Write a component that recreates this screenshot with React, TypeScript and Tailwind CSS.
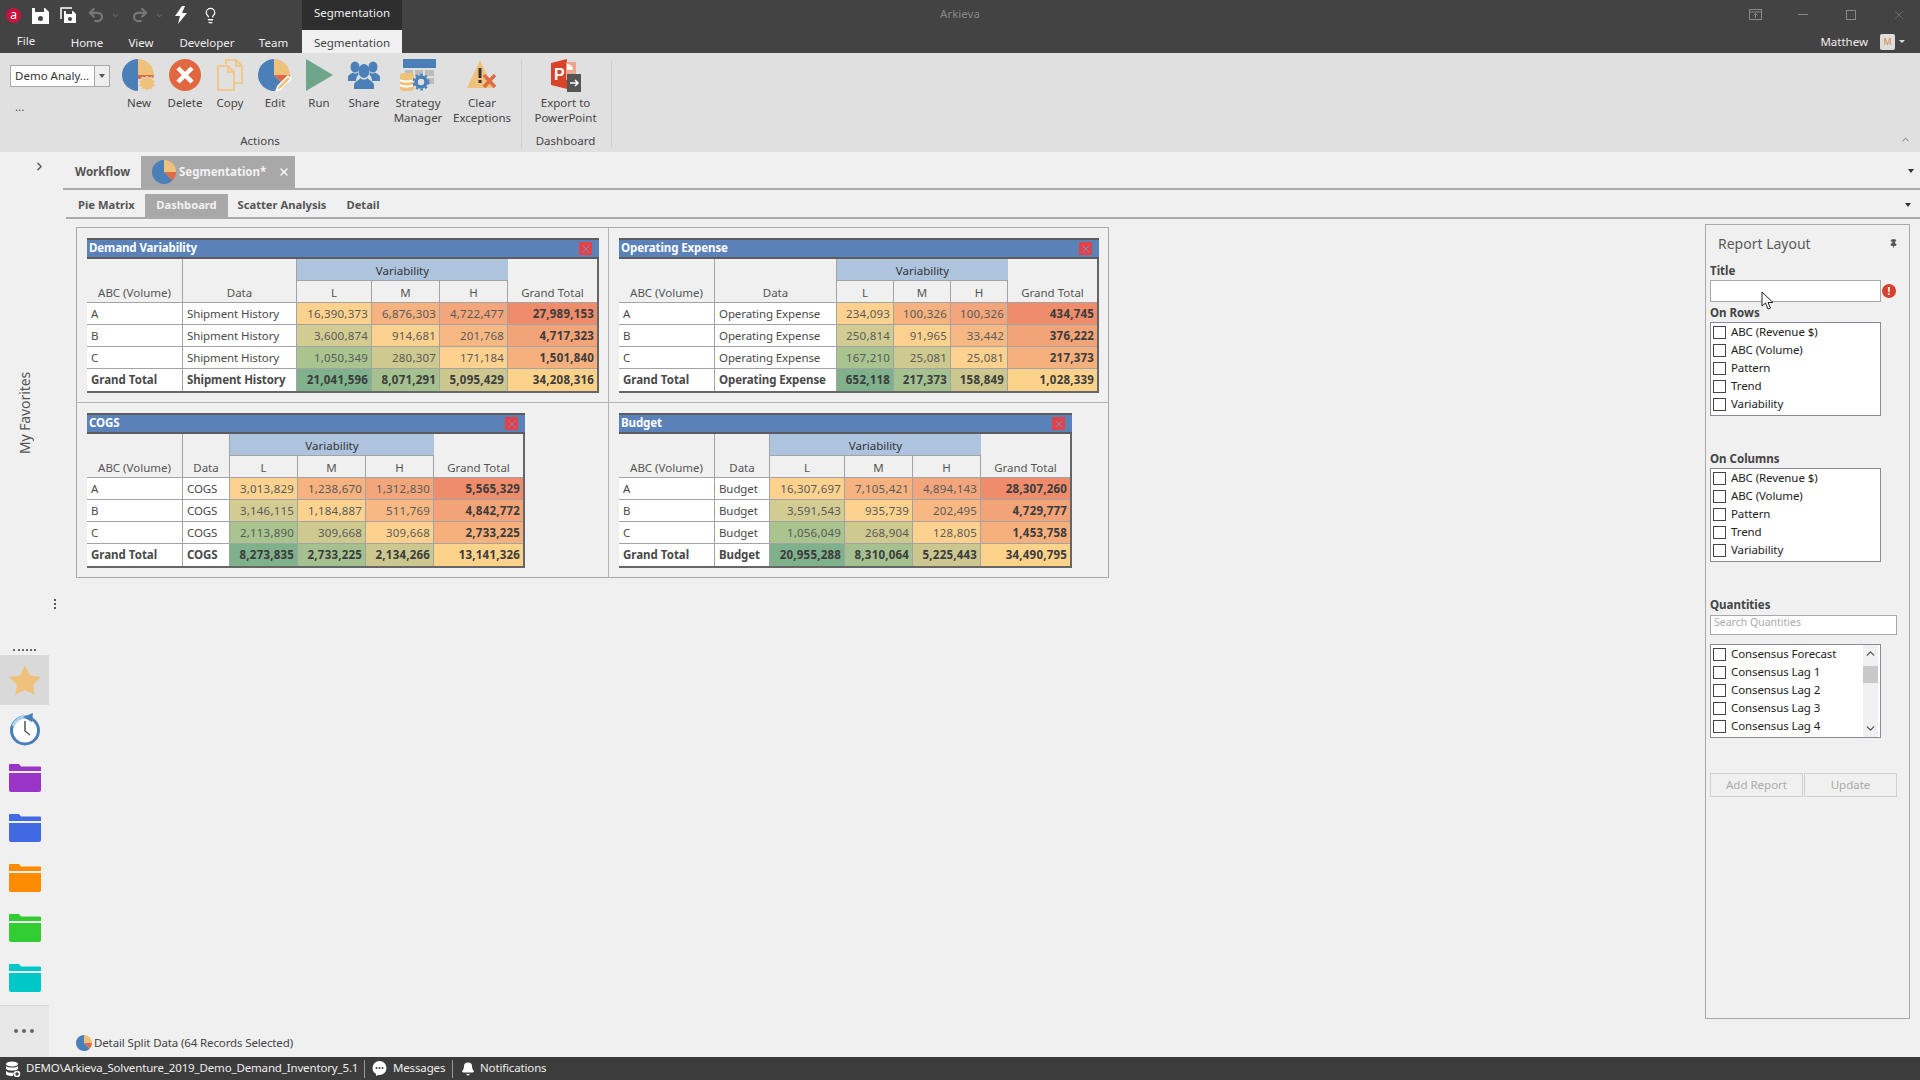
import React from "react";
import { ChevronRight, ChevronUp, ChevronDown, Lightbulb, Undo2, Redo2, X, Pin, Bell } from "lucide-react";

const BLUE = "#4a7fb8", TAN = "#efc27c", ORG = "#de6b46";

function Pie({ s = 32, wedge = true }: { s?: number; wedge?: boolean }) {
  return (
    <svg width={s} height={s} viewBox="0 0 32 32">
      <path d="M16 0A16 16 0 1 0 27.3 27.3L16 16Z" fill={BLUE} />
      <path d="M16 0A16 16 0 0 1 32 16H16Z" fill={TAN} />
      {wedge && <path d="M16 16H32A16 16 0 0 1 27.3 27.3Z" fill={ORG} />}
    </svg>
  );
}
function NewIcon() {
  return (
    <svg width="34" height="32" viewBox="0 0 34 32">
      <path d="M16 0A16 16 0 1 0 16 32V16Z" fill={BLUE} />
      <path d="M16 0A16 16 0 0 1 32 16H16Z" fill={TAN} />
      <path d="M16 16H32L31 20H16Z" fill={ORG} />
      <path d="M25 17l2 2 3-1 .5 3 3 1-1.500 2.500 1.500 2.500-3 1-.5 3-3-1-2 2-2-2-3 1-.5-3-3-1 1.500-2.500-1.500-2.500 3-1 .5-3 3 1z" fill={TAN} stroke="#e0e0e0" strokeWidth=".8" />
    </svg>
  );
}
function DeleteIcon() {
  return (
    <svg width="32" height="32" viewBox="0 0 32 32">
      <circle cx="16" cy="16" r="16" fill="#e0673f" />
      <path d="M9 9L23 23M23 9L9 23" stroke="#fff" strokeWidth="4.500" />
    </svg>
  );
}
function CopyIcon() {
  return (
    <svg width="26" height="32" viewBox="0 0 26 32" fill="none" stroke="#f0c88a" strokeWidth="2">
      <path d="M9 5V1H19L25 7V24H17" />
      <path d="M19 1V7H25" />
      <path d="M1 7H11L17 13V31H1Z" />
      <path d="M11 7V13H17" />
    </svg>
  );
}
function EditIcon() {
  return (
    <svg width="34" height="32" viewBox="0 0 34 32">
      <path d="M16 0A16 16 0 1 0 27.3 27.3L16 16Z" fill={BLUE} />
      <path d="M16 0A16 16 0 0 1 32 16H16Z" fill={TAN} />
      <path d="M16 16H32A16 16 0 0 1 27.3 27.3Z" fill={ORG} />
      <path d="M30 17L33 20L23 30L18 32L20 27Z" fill="#efc27c" stroke="#fff" strokeWidth="1.500" />
    </svg>
  );
}
function RunIcon() {
  return (
    <svg width="27" height="32" viewBox="0 0 27 32">
      <path d="M0 0L27 16L0 32Z" fill="#6fa68a" />
    </svg>
  );
}
function ShareIcon() {
  return (
    <svg width="32" height="28" viewBox="0 0 32 28" fill={BLUE}>
      <ellipse cx="7" cy="6" rx="4.500" ry="5.500" />
      <path d="M0 20V16C0 14 3 13 5 11.500C6 13 8 13 9.500 11.500C10 12.500 11 13 11 13C9 15 8 17 8 20Z" />
      <ellipse cx="25" cy="6" rx="4.500" ry="5.500" />
      <path d="M32 20V16C32 14 29 13 27 11.500C26 13 24 13 22.500 11.500C22 12.500 21 13 21 13C23 15 24 17 24 20Z" />
      <ellipse cx="16" cy="10" rx="5.500" ry="7" />
      <path d="M6 28V24C6 21 10 20 12.500 17C14 19 18 19 19.500 17C22 20 26 21 26 24V28Z" />
    </svg>
  );
}
function StrategyIcon() {
  return (
    <svg width="36" height="32" viewBox="0 0 36 32">
      <rect x="3" y="0" width="33" height="9" fill={BLUE} />
      <g fill="#bcbcbc">
        <rect x="5" y="11" width="8" height="6" /><rect x="15" y="11" width="8" height="6" /><rect x="25" y="11" width="9" height="6" />
        <rect x="25" y="19" width="9" height="6" />
      </g>
      <path d="M0 16C0 13 14 13 14 16V30C14 33 0 33 0 30Z" fill={TAN} />
      <path d="M0 21C3 23 11 23 14 21M0 26C3 28 11 28 14 26" stroke="#fff" strokeWidth="2" fill="none" />
      <circle cx="21" cy="23" r="5" fill="none" stroke={BLUE} strokeWidth="3.500" />
      <circle cx="21" cy="23" r="7.500" fill="none" stroke={BLUE} strokeWidth="2" strokeDasharray="2.500 2.400" />
    </svg>
  );
}
function ClearIcon() {
  return (
    <svg width="30" height="30" viewBox="0 0 30 30">
      <path d="M13 0L26 28H0Z" fill={TAN} />
      <rect x="11.500" y="8" width="3" height="10" fill="#333" />
      <rect x="11.500" y="20" width="3" height="3" fill="#333" />
      <path d="M17 15L28 27M28 15L17 27" stroke="#de6b46" strokeWidth="3.500" />
    </svg>
  );
}
function PptIcon() {
  return (
    <svg width="30" height="33" viewBox="0 0 30 33">
      <path d="M0 4L16 0V30L0 26Z" fill="#d9432a" />
      <rect x="15" y="3" width="10" height="18" fill="#f0a58e" />
      <path d="M16 5A6 6 0 0 1 22 11H16Z" fill="#fff" />
      <text x="3" y="21" fontSize="16" fontWeight="700" fill="#fff" fontFamily="Liberation Sans">P</text>
      <rect x="16" y="15" width="14" height="18" fill="#555" />
      <path d="M19 24H27M24 21L27 24L24 27" stroke="#fff" strokeWidth="1.500" fill="none" />
    </svg>
  );
}
function Folder({ tab, body }: { tab: string; body: string }) {
  return (
    <svg width="32" height="28" viewBox="0 0 32 28">
      <path d="M1 0H10L12 2.500H31A1 1 0 0 1 32 3.500V7H0V1A1 1 0 0 1 1 0Z" fill={tab} />
      <path d="M0 9H32V26A2 2 0 0 1 30 28H2A2 2 0 0 1 0 26Z" fill={body} />
    </svg>
  );
}
function ClockIcon() {
  return (
    <svg width="32" height="33" viewBox="0 0 32 33">
      <circle cx="16" cy="17.500" r="13.500" fill="#fff" stroke="#4a7fb8" strokeWidth="3" />
      <path d="M4 13A13.500 13.500 0 0 1 18 4" stroke="#a9d4ee" strokeWidth="3" fill="none" />
      <path d="M14 4L24 0L23 9Z" fill="#4a7fb8" />
      <path d="M16 8V18L21 22" stroke="#555" strokeWidth="1.500" fill="none" />
    </svg>
  );
}
function Floppy({ all }: { all?: boolean }) {
  return (
    <svg width="17" height="17" viewBox="0 0 17 17">
      {all && <path d="M1 12V1H12" fill="none" stroke="#fff" strokeWidth="1.500" />}
      <path d={all ? "M4 4H13L16 7V16H4Z" : "M0 1H13L17 5V17H0Z"} fill="#fff" />
      <rect x={all ? 6 : 3} y={all ? 4 : 1} width={all ? 6 : 9} height={all ? 3 : 4} fill="#434343" />
      <circle cx={all ? 10 : 8.500} cy={all ? 12 : 11.500} r={all ? 2 : 2.500} fill="#434343" />
    </svg>
  );
}

const CELL = [
  ["bg-[#fdd28f]", "bg-[#f6b27f]", "bg-[#f3a67b]", "bg-[#ee8c6c]"],
  ["bg-[#d3cc92]", "bg-[#fdd28f]", "bg-[#f8b884]", "bg-[#f3a378]"],
  ["bg-[#a9c48f]", "bg-[#cdc98f]", "bg-[#fed28e]", "bg-[#f6b07e]"],
  ["bg-[#7fb18c]", "bg-[#a5c190]", "bg-[#cbc78f]", "bg-[#fdd28a]"],
];

function Table(p: { title: string; data: string; cols: string; rows: string[][] }) {
  const labels = ["A", "B", "C", "Grand Total"];
  const hd = "bg-[#f0f0f0] text-[#555] border-r border-b border-[#a3a3a3] flex items-end justify-center leading-[19px]";
  return (
    <div className="w-fit text-[11.5px]">
      <div className="h-[21px] bg-[#5a82b8] border-y-2 border-[#5c5c5c] flex items-center justify-between pl-[2px] pr-[7px] text-white font-bold">
        <span className="-translate-y-px tracking-[-0.1px]">{p.title}</span>
        <span className="w-[13px] h-[13px] bg-[#e2434b] flex items-center justify-center">
          <X size={12} strokeWidth={2} className="text-[#7a8cc0]" />
        </span>
      </div>
      <div className={"grid grid-rows-[22px_22px_22px_22px_22px_22px] border-r-2 border-b-2 border-[#666] " + p.cols}>
        <div className={hd + " row-span-2"}>ABC (Volume)</div>
        <div className={hd + " row-span-2"}>Data</div>
        <div className="col-span-3 bg-[#aec3de] text-[#333] border-b border-[#a3a3a3] flex items-center justify-center pt-[2px]">Variability</div>
        <div className="row-span-2 bg-[#f0f0f0] text-[#555] border-b border-[#a3a3a3] flex items-end justify-center leading-[19px]">Grand Total</div>
        <div className={hd}>L</div>
        <div className={hd}>M</div>
        <div className={hd}>H</div>
        {p.rows.map((r, i) => (
          <React.Fragment key={i}>
            <div className={"bg-white border-r border-[#a3a3a3] pl-[4px] flex items-center text-[#4a4a4a] " + (i === 3 ? "font-bold" : "border-b")}>{labels[i]}</div>
            <div className={"bg-white border-r border-[#a3a3a3] pl-[4px] flex items-center text-[#4a4a4a] tracking-[-0.1px] " + (i === 3 ? "font-bold" : "border-b")}>{p.data}</div>
            {r.map((v, j) => (
              <div
                key={j}
                className={
                  "pr-[3px] flex items-center justify-end border-[#a3a3a3] tracking-[0.2px] " +
                  CELL[i][j] +
                  (j < 3 ? " border-r" : "") +
                  (i < 3 ? " border-b" : "") +
                  (i === 3 || j === 3 ? " font-bold text-[#3c3c3c]" : " text-[#5a5a5a]")
                }
              >
                {v}
              </div>
            ))}
          </React.Fragment>
        ))}
      </div>
    </div>
  );
}

function RibbonBtn({ w, icon, label }: { w: string; icon: React.ReactNode; label: React.ReactNode }) {
  return (
    <div className={"flex flex-col items-center " + w}>
      <div className="h-[32px] flex items-center justify-center">{icon}</div>
      <div className="mt-[4px] text-center leading-[15px] text-[#444] whitespace-nowrap">{label}</div>
    </div>
  );
}

function CheckList({ items, scroll }: { items: string[]; scroll?: boolean }) {
  return (
    <div className="w-[171px] h-[94px] border border-[#868b96] bg-white flex">
      <div className="flex-1">
        {items.map((t) => (
          <div key={t} className="h-[18px] flex items-center pl-[2px]">
            <span className="w-[13px] h-[13px] border border-[#444] bg-white" />
            <span className="ml-[5px] text-[#222] whitespace-nowrap tracking-[-0.1px]">{t}</span>
          </div>
        ))}
      </div>
      {scroll && (
        <div className="w-[15px] mr-[2px] bg-[#f0f0f0] flex flex-col items-center justify-between py-[2px]">
          <ChevronUp size={13} strokeWidth={2.5} className="text-[#555]" />
          <div className="w-full h-[17px] bg-[#c8c8c8] mb-[33px] -mt-[1px]" />
          <ChevronDown size={13} strokeWidth={2.5} className="text-[#555]" />
        </div>
      )}
    </div>
  );
}

const FIELDS = ["ABC (Revenue $)", "ABC (Volume)", "Pattern", "Trend", "Variability"];

export default function App() {
  return (
    <div className="w-[1920px] h-[1080px] flex flex-col overflow-hidden bg-[#f0f0f0] text-[11.5px] [font-family:'Noto_Sans',sans-serif]">
      {/* title bar */}
      <div className="h-[53px] bg-[#434343] flex flex-col shrink-0">
        <div className="h-[30px] flex">
          <div className="w-[302px] flex items-center">
            <span className="ml-[6px] w-[15px] h-[15px] rounded-full bg-[#c8123f] text-white text-[12px] leading-[14px] text-center">a</span>
            <span className="ml-[11px]"><Floppy /></span>
            <span className="ml-[11px]"><Floppy all /></span>
            <Undo2 size={18} strokeWidth={3} className="ml-[10px] text-[#777]" />
            <ChevronDown size={9} strokeWidth={3} className="ml-[6px] text-[#666]" />
            <Redo2 size={18} strokeWidth={3} className="ml-[11px] text-[#777]" />
            <ChevronDown size={9} strokeWidth={3} className="ml-[6px] text-[#666]" />
            <svg width="12" height="18" viewBox="0 0 12 18" className="ml-[11px]"><path d="M7 0L0 10H5L3 18L12 7H7L10 0Z" fill="#fff" /></svg>
            <Lightbulb size={17} strokeWidth={1.800} className="ml-[15px] text-white" />
          </div>
          <div className="w-[100px] bg-[#2e2e2e] text-[#eee] flex items-center justify-center pb-[4px]">Segmentation</div>
          <div className="flex-1 flex items-center justify-center text-[#888] pb-[2px]">Arkieva</div>
          <div className="w-[402px] flex items-center justify-end pr-[14px] pb-[1px] text-[#888]">
            <svg width="13" height="11" viewBox="0 0 13 11" fill="none" stroke="#888"><rect x=".5" y=".5" width="12" height="10" /><path d="M.5 3H12.500M6.500 9V5M4.500 6.500L6.500 4.500L8.500 6.500" /></svg>
            <span className="ml-[36px] w-[10px] h-px bg-[#888]" />
            <span className="ml-[38px] w-[10px] h-[10px] border border-[#888]" />
            <X size={14} strokeWidth={1} className="ml-[36px]" />
          </div>
        </div>
        <div className="h-[23px] flex text-[#eee]">
          <div className="w-[52px] text-center leading-[21px]">File</div>
          <div className="ml-[9px] w-[52px] text-center leading-[25px]">Home</div>
          <div className="w-[56px] text-center leading-[25px]">View</div>
          <div className="w-[76px] text-center leading-[25px]">Developer</div>
          <div className="w-[57px] text-center leading-[25px]">Team</div>
          <div className="w-[100px] bg-[#f0f0f0] text-[#444] text-center leading-[25px]">Segmentation</div>
          <div className="flex-1 flex items-center justify-end pr-[15px]">
            <span className="leading-[23px]">Matthew</span>
            <span className="ml-[12px] w-[15px] h-[16px] rounded-[2px] bg-[#ddd] text-[#d9873f] text-[9px] leading-[16px] text-center">M</span>
            <span className="ml-[4px] w-0 h-0 border-x-[3px] border-t-[3px] border-x-transparent border-t-[#ddd]" />
          </div>
        </div>
      </div>

      {/* ribbon */}
      <div className="h-[99px] bg-[#e0e0e0] shrink-0 flex pl-[4px] relative">
        <div className="w-[512px] flex flex-col justify-between pb-[4px]">
          <div className="flex pt-[6px]">
            <div className="w-[112px]">
              <div className="ml-[6px] mt-[6px] w-[100px] h-[22px] border border-[#a8a8a8] bg-white flex items-center text-[#333]">
                <span className="w-[83px] pl-[4px] whitespace-nowrap overflow-hidden">Demo Analy...</span>
                <span className="flex-1 h-full bg-[#eee] border-l border-[#aaa] flex items-center justify-center">
                  <span className="w-0 h-0 border-x-[3px] border-t-[4px] border-x-transparent border-t-[#555]" />
                </span>
              </div>
              <div className="ml-[11px] mt-[13px] text-[#444] leading-[14px]">...</div>
            </div>
            <RibbonBtn w="w-[46px]" icon={<NewIcon />} label="New" />
            <RibbonBtn w="w-[46px]" icon={<DeleteIcon />} label="Delete" />
            <RibbonBtn w="w-[44px]" icon={<CopyIcon />} label="Copy" />
            <RibbonBtn w="w-[46px]" icon={<EditIcon />} label="Edit" />
            <RibbonBtn w="w-[42px]" icon={<RunIcon />} label="Run" />
            <RibbonBtn w="w-[48px]" icon={<ShareIcon />} label="Share" />
            <RibbonBtn w="w-[60px]" icon={<StrategyIcon />} label={<>Strategy<br />Manager</>} />
            <RibbonBtn w="w-[68px]" icon={<ClearIcon />} label={<>Clear<br />Exceptions</>} />
          </div>
          <div className="text-center leading-[15px] text-[#444]">Actions</div>
        </div>
        <div className="ml-[5px] mt-[7px] mb-[4px] w-px bg-[#d0d0d0]" />
        <div className="w-[89px] flex flex-col justify-between pb-[4px]">
          <div className="pt-[6px] pr-[2px]">
            <RibbonBtn w="w-full" icon={<PptIcon />} label={<>Export to<br />PowerPoint</>} />
          </div>
          <div className="text-center leading-[15px] text-[#444] pr-[2px]">Dashboard</div>
        </div>
        <div className="mt-[7px] mb-[4px] w-px bg-[#d0d0d0]" />
        <ChevronUp size={11} strokeWidth={2} className="absolute right-[9px] bottom-[7px] text-[#666]" />
      </div>

      {/* body */}
      <div className="flex-1 flex min-h-0 relative">
        <div className="w-[49px] shrink-0 flex flex-col">
          <div className="flex-1 flex flex-col">
            <div className="h-[28px] flex items-center justify-center pl-[29px]">
              <ChevronRight size={13} strokeWidth={2.500} className="text-[#555]" />
            </div>
            <div className="mt-[191px] h-[84px] ml-[16px] [writing-mode:vertical-rl] rotate-180 text-center text-[14px] tracking-[-0.1px] text-[#555] leading-[18px]">My Favorites</div>
            <div className="mt-auto h-[14px] ml-[13px] w-[23px] border-t-2 border-dotted border-[#666] translate-y-[8px]" />
          </div>
          <div className="h-[50px] bg-[#d9d9d9] flex items-center justify-center pl-[1px]">
            <svg width="32" height="30" viewBox="0 0 32 30"><path d="M16 0L21 10.500L32 12L24 20L26 30L16 25L6 30L8 20L0 12L11 10.500Z" fill="#efc27c" /></svg>
          </div>
          <div className="h-[50px] flex items-center justify-center pl-[1px] pb-[1px]"><ClockIcon /></div>
          <div className="h-[50px] flex items-center justify-center pl-[1px] pb-[5px]"><Folder tab="#9a35c8" body="#9a35c8" /></div>
          <div className="h-[50px] flex items-center justify-center pl-[1px] pb-[5px]"><Folder tab="#4169e1" body="#4169e1" /></div>
          <div className="h-[50px] flex items-center justify-center pl-[1px] pb-[5px]"><Folder tab="#ff8c00" body="#ff8c00" /></div>
          <div className="h-[50px] flex items-center justify-center pl-[1px] pb-[5px]"><Folder tab="#32cd32" body="#32cd32" /></div>
          <div className="h-[50px] flex items-center justify-center pl-[1px] pb-[5px]"><Folder tab="#00c8c8" body="#00c8c8" /></div>
          <div className="h-[52px] bg-[#e8e8e8] border-t border-[#d8d8d8] flex items-center justify-center gap-[4px] pr-[2px] pb-[2px]">
            <span className="w-[4px] h-[4px] rounded-full bg-[#666]" />
            <span className="w-[4px] h-[4px] rounded-full bg-[#666]" />
            <span className="w-[4px] h-[4px] rounded-full bg-[#666]" />
          </div>
        </div>
        <div className="absolute left-[54px] top-[447px] flex flex-col gap-[2px]">
          <span className="w-[2px] h-[2px] bg-[#555]" />
          <span className="w-[2px] h-[2px] bg-[#555]" />
          <span className="w-[2px] h-[2px] bg-[#555]" />
        </div>

        <div className="flex-1 flex flex-col pl-[14px] min-w-0">
          <div className="h-[38px] pt-[4px] flex items-end border-b-2 border-[#aaa] shrink-0 relative text-[11.5px] font-bold text-[#555]">
            <div className="w-[78px] h-[32px] pl-[12px] flex items-center">Workflow</div>
            <div className="w-[154px] h-[32px] bg-[#a8a8a8] flex items-center pl-[11px] text-[#f2f2f2]">
              <Pie s={24} />
              <span className="ml-[3px] font-bold">Segmentation*</span>
              <X size={12} strokeWidth={2.5} className="ml-[12px] text-white" />
            </div>
            <span className="absolute right-[6px] top-[17px] w-0 h-0 border-x-[3.5px] border-t-[4px] border-x-transparent border-t-[#333]" />
          </div>
          <div className="ml-[3px] h-[29px] pt-[4px] flex items-stretch border-b-2 border-[#aaa] shrink-0 relative text-[11.2px] font-bold text-[#555]">
            <div className="w-[79px] pl-[12px] flex items-center">Pie Matrix</div>
            <div className="w-[83px] bg-[#a8a8a8] text-[#f2f2f2] flex items-center justify-center">Dashboard</div>
            <div className="w-[108px] flex items-center justify-center">Scatter Analysis</div>
            <div className="w-[54px] flex items-center justify-center">Detail</div>
            <span className="absolute right-[9px] top-[13px] w-0 h-0 border-x-[3.5px] border-t-[4px] border-x-transparent border-t-[#333]" />
          </div>

          <div className="flex-1 flex justify-between pr-[10px] min-h-0">
            <div className="ml-[13px] mt-[8px] w-[1033px] h-[351px] border border-[#a8a8a8] grid grid-cols-[532px_500px] grid-rows-[175px_174px]">
              <div className="border-r border-b border-[#b4b4b4] pl-[10px] pt-[10px]">
                <Table title="Demand Variability" data="Shipment History" cols="grid-cols-[96px_114px_75px_68px_68px_89px]" rows={[
                  ["16,390,373", "6,876,303", "4,722,477", "27,989,153"],
                  ["3,600,874", "914,681", "201,768", "4,717,323"],
                  ["1,050,349", "280,307", "171,184", "1,501,840"],
                  ["21,041,596", "8,071,291", "5,095,429", "34,208,316"],
                ]} />
              </div>
              <div className="border-b border-[#b4b4b4] pl-[10px] pt-[10px]">
                <Table title="Operating Expense" data="Operating Expense" cols="grid-cols-[96px_122px_57px_57px_57px_89px]" rows={[
                  ["234,093", "100,326", "100,326", "434,745"],
                  ["250,814", "91,965", "33,442", "376,222"],
                  ["167,210", "25,081", "25,081", "217,373"],
                  ["652,118", "217,373", "158,849", "1,028,339"],
                ]} />
              </div>
              <div className="border-r border-[#b4b4b4] pl-[10px] pt-[10px]">
                <Table title="COGS" data="COGS" cols="grid-cols-[96px_47px_68px_68px_68px_89px]" rows={[
                  ["3,013,829", "1,238,670", "1,312,830", "5,565,329"],
                  ["3,146,115", "1,184,887", "511,769", "4,842,772"],
                  ["2,113,890", "309,668", "309,668", "2,733,225"],
                  ["8,273,835", "2,733,225", "2,134,266", "13,141,326"],
                ]} />
              </div>
              <div className="pl-[10px] pt-[10px]">
                <Table title="Budget" data="Budget" cols="grid-cols-[96px_55px_75px_68px_68px_89px]" rows={[
                  ["16,307,697", "7,105,421", "4,894,143", "28,307,260"],
                  ["3,591,543", "935,739", "202,495", "4,729,777"],
                  ["1,056,049", "268,904", "128,805", "1,453,758"],
                  ["20,955,288", "8,310,064", "5,225,443", "34,490,795"],
                ]} />
              </div>
            </div>

            <div className="relative mt-[5px] w-[205px] h-[795px] border border-[#a8a8a8] pl-[4px] shrink-0">
              <div className="h-[38px] pl-[8px] pr-[11px] pb-[2px] flex items-center justify-between text-[14px] text-[#5b5b5b]">
                <span>Report Layout</span>
                <Pin size={9} strokeWidth={2.500} className="text-[#555] fill-[#555]" />
              </div>
              <div className="h-[16px] leading-[16px] font-bold text-[#444]">Title</div>
              <div className="mt-[1px] flex items-center">
                <div className="w-[171px] h-[22px] border border-[#a8a8a8] bg-white" />
                <span className="ml-[1px] w-[14px] h-[14px] rounded-full bg-[#d8402e] text-white font-bold text-[10px] leading-[14px] text-center">!</span>
              </div>
              <div className="mt-[3px] h-[16px] leading-[16px] font-bold text-[#444]">On Rows</div>
              <div className="mt-[1px]"><CheckList items={FIELDS} /></div>
              <div className="mt-[35px] h-[16px] leading-[16px] font-bold text-[#444]">On Columns</div>
              <div className="mt-[1px]"><CheckList items={FIELDS} /></div>
              <div className="mt-[35px] h-[16px] leading-[16px] font-bold text-[#444]">Quantities</div>
              <div className="mt-[2px] w-[187px] h-[20px] border border-[#a8a8a8] bg-white pl-[3px] text-[10.5px] leading-[13px] text-[#aaa]">Search Quantities</div>
              <div className="mt-[9px]">
                <CheckList scroll items={["Consensus Forecast", "Consensus Lag 1", "Consensus Lag 2", "Consensus Lag 3", "Consensus Lag 4"]} />
              </div>
              <div className="mt-[35px] flex gap-px w-[187px] h-[24px] text-[#aaa]">
                <div className="flex-1 border border-[#d0d0d0] flex items-center justify-center">Add Report</div>
                <div className="flex-1 border border-[#d0d0d0] flex items-center justify-center">Update</div>
              </div>
              <svg width="13" height="20" viewBox="0 0 13 20" className="absolute left-[55px] top-[66px]">
                <path d="M1 1V15L4.500 12L7 18L9.500 17L7 11.500H12Z" fill="#fff" stroke="#222" strokeWidth="1" />
              </svg>
            </div>
          </div>

          <div className="h-[27px] shrink-0 flex items-center ml-[13px] pb-[1px] text-[#444]">
            <Pie s={16} />
            <span className="ml-[2px] tracking-[-0.13px]">Detail Split Data (64 Records Selected)</span>
          </div>
        </div>
      </div>

      {/* status bar */}
      <div className="h-[23px] shrink-0 bg-[#3c3c3c] flex items-center text-[#eee] pl-[5px] tracking-[-0.15px]">
        <svg width="16" height="16" viewBox="0 0 16 16" fill="#fff">
          <ellipse cx="7" cy="3" rx="6" ry="2.500" />
          <path d="M1 5C3 7 11 7 13 5V8C11 10 3 10 1 8ZM1 10C3 12 8 12 9 11.500L8 15C5 15 1 14.500 1 13Z" />
          <circle cx="12" cy="13" r="2.500" fill="none" stroke="#fff" strokeWidth="1.500" />
        </svg>
        <span className="ml-[5px] w-[331px] whitespace-nowrap -translate-y-px">DEMO\Arkieva_Solventure_2019_Demo_Demand_Inventory_5.1</span>
        <span className="ml-[7px] w-px h-[18px] bg-[#999]" />
        <svg width="15" height="15" viewBox="0 0 15 15" className="ml-[7px]">
          <circle cx="7.500" cy="7" r="7" fill="#fff" />
          <path d="M4 12L4 15L8 13Z" fill="#fff" />
          <circle cx="4.500" cy="7" r="1" fill="#3c3c3c" /><circle cx="7.500" cy="7" r="1" fill="#3c3c3c" /><circle cx="10.500" cy="7" r="1" fill="#3c3c3c" />
        </svg>
        <span className="ml-[6px] w-[52px] -translate-y-px">Messages</span>
        <span className="ml-[7px] w-px h-[18px] bg-[#999]" />
        <Bell size={14} strokeWidth={2} className="ml-[8px] text-white fill-white" />
        <span className="ml-[5px] -translate-y-px">Notifications</span>
      </div>
    </div>
  );
}
